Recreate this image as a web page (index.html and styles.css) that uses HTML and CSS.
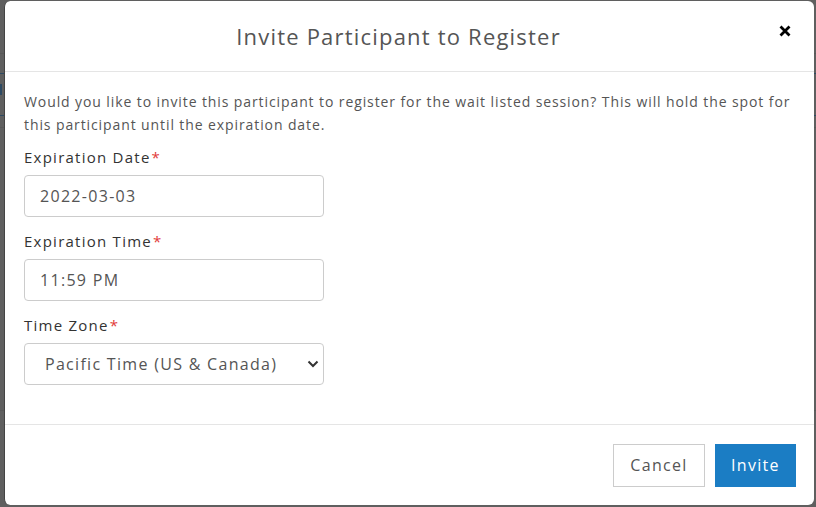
FILE: index.html
```html
<!DOCTYPE html>
<html>
<head>
<meta charset="utf-8">
<link rel="stylesheet" href="styles.css">
</head>
<body>
<div class="backdrop-mark"></div>
<div class="modal">
  <div class="modal-header">
    <h4 class="modal-title">Invite Participant to Register</h4>
    <button class="close" aria-label="Close">
      <svg width="12" height="12" viewBox="0 0 12 12"><path d="M1.5 1.5 L10.5 10.5 M10.5 1.5 L1.5 10.5" stroke="#000" stroke-width="2.8" stroke-linecap="butt"/></svg>
    </button>
  </div>
  <div class="modal-body">
    <p class="intro">Would you like to invite this participant to register for the wait listed session? This will hold the spot for this participant until the expiration date.</p>
    <div class="field">
      <label>Expiration Date<span class="req">*</span></label>
      <div class="input">2022-03-03</div>
    </div>
    <div class="field">
      <label>Expiration Time<span class="req">*</span></label>
      <div class="input">11:59 PM</div>
    </div>
    <div class="field">
      <label>Time Zone<span class="req">*</span></label>
      <div class="input select">
        <span>Pacific Time (US &amp; Canada)</span>
        <svg width="12" height="8" viewBox="0 0 12 8"><path d="M1.5 1.5 L6 6 L10.5 1.5" fill="none" stroke="#333" stroke-width="2"/></svg>
      </div>
    </div>
  </div>
  <div class="modal-footer">
    <button class="btn btn-default">Cancel</button>
    <button class="btn btn-primary">Invite</button>
  </div>
</div>
</body>
</html>
```
FILE: styles.css
```css
html, body {
  margin: 0;
  padding: 0;
  height: 100%;
}
body {
  background-color: #5f5f5f;
  background-image:
    linear-gradient(#585858, #585858),
    linear-gradient(#2e4a63, #2e4a63),
    linear-gradient(#2e4a63, #2e4a63),
    linear-gradient(#585858, #585858),
    linear-gradient(#585858, #585858);
  background-size: 100% 1px;
  background-repeat: no-repeat;
  background-position: 0 53px, 0 73px, 0 115px, 0 127px, 0 410px;
  font-family: "Open Sans", "Liberation Sans", sans-serif;
  overflow: hidden;
  position: relative;
}
.backdrop-mark {
  position: absolute;
  left: 0;
  top: 84px;
  width: 2px;
  height: 11px;
  background: #2e4a63;
}
.modal {
  position: relative;
  margin: 1px 2px 0 4px;
  height: 504px;
  background: #fff;
  border-left: 1px solid #444;
  border-radius: 6px;
  display: flex;
  flex-direction: column;
}
.modal-header {
  height: 70px;
  border-bottom: 1px solid #e5e5e5;
  display: flex;
  align-items: center;
  justify-content: center;
  position: relative;
}
.modal-title {
  margin: 0 0 0 -22px;
  font-weight: 400;
  font-size: 22px;
  color: #555;
  letter-spacing: 1.2px;
}
.close {
  position: absolute;
  right: 22px;
  top: 23px;
  border: 0;
  background: none;
  padding: 0;
  width: 14px;
  height: 14px;
  display: flex;
  align-items: center;
  justify-content: center;
}
.modal-body {
  flex: 1;
  padding: 18px 19px 0 19px;
}
.intro {
  margin: 0 0 11px;
  font-size: 14px;
  line-height: 23px;
  color: #555;
  letter-spacing: 0.9px;
}
.field {
  margin-bottom: 14px;
}
label {
  display: block;
  font-size: 15px;
  color: #333;
  line-height: 20px;
  margin-bottom: 8px;
  letter-spacing: 1.25px;
}
.req {
  color: #e23a3a;
  margin-left: 1px;
}
.input {
  box-sizing: border-box;
  width: 300px;
  height: 42px;
  border: 1px solid #ccc;
  border-radius: 4px;
  padding: 0 15px;
  display: flex;
  align-items: center;
  font-size: 16px;
  color: #555;
  letter-spacing: 1.3px;
}
.select {
  justify-content: space-between;
  padding: 0 4px 0 20px;
}
.modal-footer {
  border-top: 1px solid #e5e5e5;
  height: 80px;
  display: flex;
  justify-content: flex-end;
  align-items: center;
  gap: 10px;
  padding: 0 18px 0 0;
}
.btn {
  height: 43px;
  font-family: inherit;
  font-size: 16px;
  padding: 0;
  border-radius: 0;
  letter-spacing: 1.3px;
}
.btn-default {
  background: #fff;
  border: 1px solid #ccc;
  color: #555;
  width: 92px;
}
.btn-primary {
  background: #1b7dc4;
  border: 1px solid #1b7dc4;
  color: #fff;
  width: 81px;
}
```
